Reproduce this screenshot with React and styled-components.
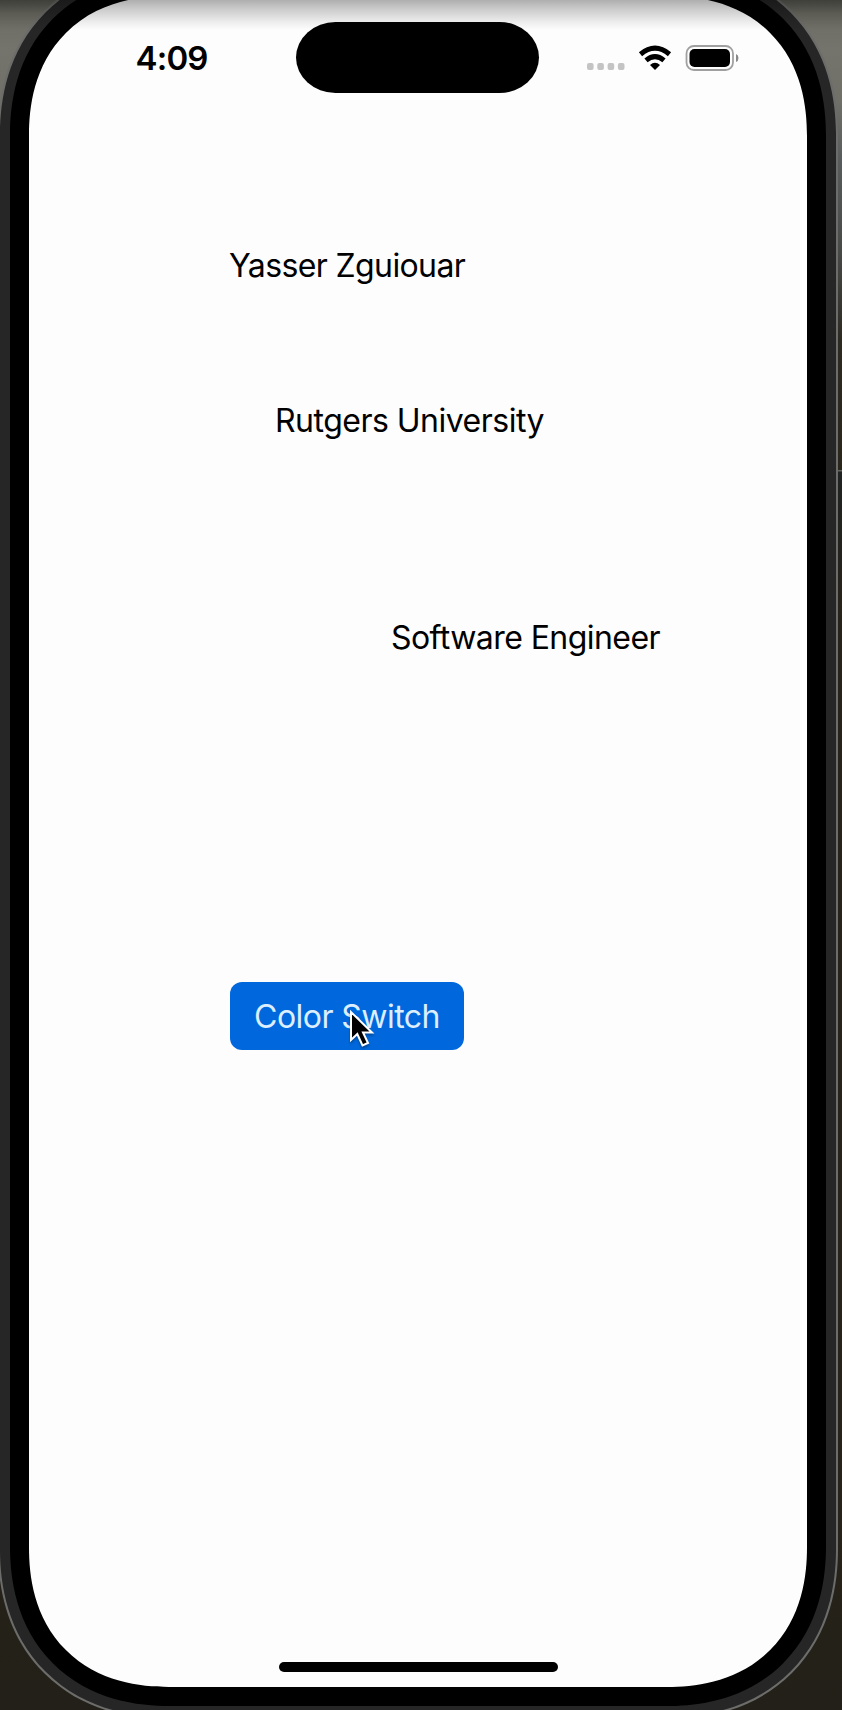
import React from "react";
import styled, { createGlobalStyle, css } from "styled-components";

const GlobalStyle = createGlobalStyle`
  * { box-sizing: border-box; }
  body { margin: 0; background: #22201a; font-family: Inter, "Liberation Sans", sans-serif; }
`;

const continuousCorner = (radius, smoothRadius, curve) => css`
  border-radius: ${radius}px;
  @supports (corner-shape: superellipse(1.2)) {
    border-radius: ${smoothRadius}px;
    corner-shape: superellipse(${curve});
  }
`;

const Desktop = styled.main`
  position: relative;
  width: 842px;
  height: 1710px;
  overflow: hidden;
  background: linear-gradient(#5c5c55 0, #6c6c64 14px, #74746c 50px, #707069 100px, #585c5c 160px, #484a48 250px, #2d2a22 340px, #2a261c 470px, #62625e 470px, #62625e 471px, #202322 472px, #28231a 620px, #28231a 1500px, #222018 1710px);
`;

const Phone = styled.section`
  width: 840px;
  height: 1754px;
  margin: -35px 0 0 -2px;
  padding: 9px 10px 11px;
  border: 2px solid #6c6c6a;
  ${continuousCorner(157, 170, 1.136)}
  background: #262626;
`;

const Bezel = styled.div`
  height: 100%;
  padding: 20px 19px 19px;
  ${continuousCorner(147, 160, 1.155)}
  background: #000;
`;

const Screen = styled.div`
  display: flex;
  flex-direction: column;
  align-items: flex-start;
  height: 100%;
  ${continuousCorner(127, 140, 1.18)}
  background: #fdfdfd;
  color: #000;
`;

const StatusBar = styled.header`
  display: grid;
  grid-template-columns: 267px 243px 1fr;
  align-items: center;
  width: 100%;
  height: 71px;
  margin-top: 26px;
`;

const Time = styled.time`
  padding-left: 106.5px;
  font-size: 33px;
  font-weight: 600;
  line-height: 40px;
  letter-spacing: -0.8px;
`;

const Island = styled.div`
  height: 71px;
  border-radius: 40px / 36px;
  background: #000;
`;

const Indicators = styled.div`
  display: flex;
  align-items: center;
  padding-left: 48px;
`;

const Label = styled.p`
  margin: ${(p) => p.$gap}px 0 0 ${(p) => p.$indent}px;
  font-size: 32px;
  line-height: 40px;
  letter-spacing: ${(p) => p.$tracking}px;
  white-space: nowrap;
`;

const SwitchButton = styled.button`
  position: relative;
  width: 234px;
  height: 68px;
  margin: 324px 0 0 201px;
  padding: 2px 0 0;
  border: 0;
  border-radius: 12px;
  background: #0068dc;
  color: #dceeff;
  font: 400 32px/40px Inter, "Liberation Sans", sans-serif;
  letter-spacing: -0.55px;
  white-space: nowrap;
`;

const Pointer = styled.svg`
  position: absolute;
  left: 119px;
  top: 27px;
  filter: drop-shadow(0 2px 1px rgba(0, 0, 0, 0.3));
`;

const HomeIndicator = styled.div`
  width: 279px;
  height: 10px;
  margin: auto auto 15px 249.5px;
  border-radius: 5px;
  background: #000;
`;

const TopShade = styled.div`
  position: absolute;
  inset: 0 0 auto;
  height: 30px;
  background: linear-gradient(rgba(0, 0, 0, 0.31), rgba(0, 0, 0, 0.2) 30%, rgba(0, 0, 0, 0.06) 75%, rgba(0, 0, 0, 0));
`;

function StatusIcons() {
  return (
    <svg width="156" height="28" viewBox="587 44 156 28" aria-label="Signal, Wi-Fi and battery">
      {[587, 597.3, 607.6, 617.9].map((x) => (
        <rect key={x} x={x} y="63" width="6.6" height="7" rx="2" fill="#c4c4c4" />
      ))}
      <path d="M640.5 54.2Q655 42.2 669.5 54.2M646 60.4Q655 53 664 60.4" fill="none" stroke="#000" strokeWidth="5" />
      <path d="M650 65Q655 60.4 660 65L655 70Z" />
      <rect x="686.5" y="46" width="46.5" height="24" rx="7.5" fill="none" stroke="#a0a0a0" strokeWidth="1.8" />
      <rect x="689.5" y="49" width="40.5" height="18" rx="5" />
      <path d="M736 54Q738.5 55 738.5 58T736 62Z" fill="#888" />
    </svg>
  );
}

export default function App() {
  return (
    <Desktop>
      <GlobalStyle />
      <Phone>
        <Bezel>
          <Screen>
            <StatusBar>
              <Time>4:09</Time>
              <Island />
              <Indicators><StatusIcons /></Indicators>
            </StatusBar>
            <Label $gap={153} $indent={200} $tracking={-0.62}>Yasser Zguiouar</Label>
            <Label $gap={115} $indent={246} $tracking={-0.51}>Rutgers University</Label>
            <Label $gap={177} $indent={362} $tracking={-0.56}>Software Engineer</Label>
            <SwitchButton>
              Color Switch
              <Pointer width="26" height="40" viewBox="0 0 26 40" aria-hidden="true">
                <path d="M2 3V31L8.3 25L13.5 36.5L19 34L14 23.5H23Z" fill="#000" stroke="#fff" strokeWidth="2" />
              </Pointer>
            </SwitchButton>
            <HomeIndicator />
          </Screen>
        </Bezel>
      </Phone>
      <TopShade />
    </Desktop>
  );
}
